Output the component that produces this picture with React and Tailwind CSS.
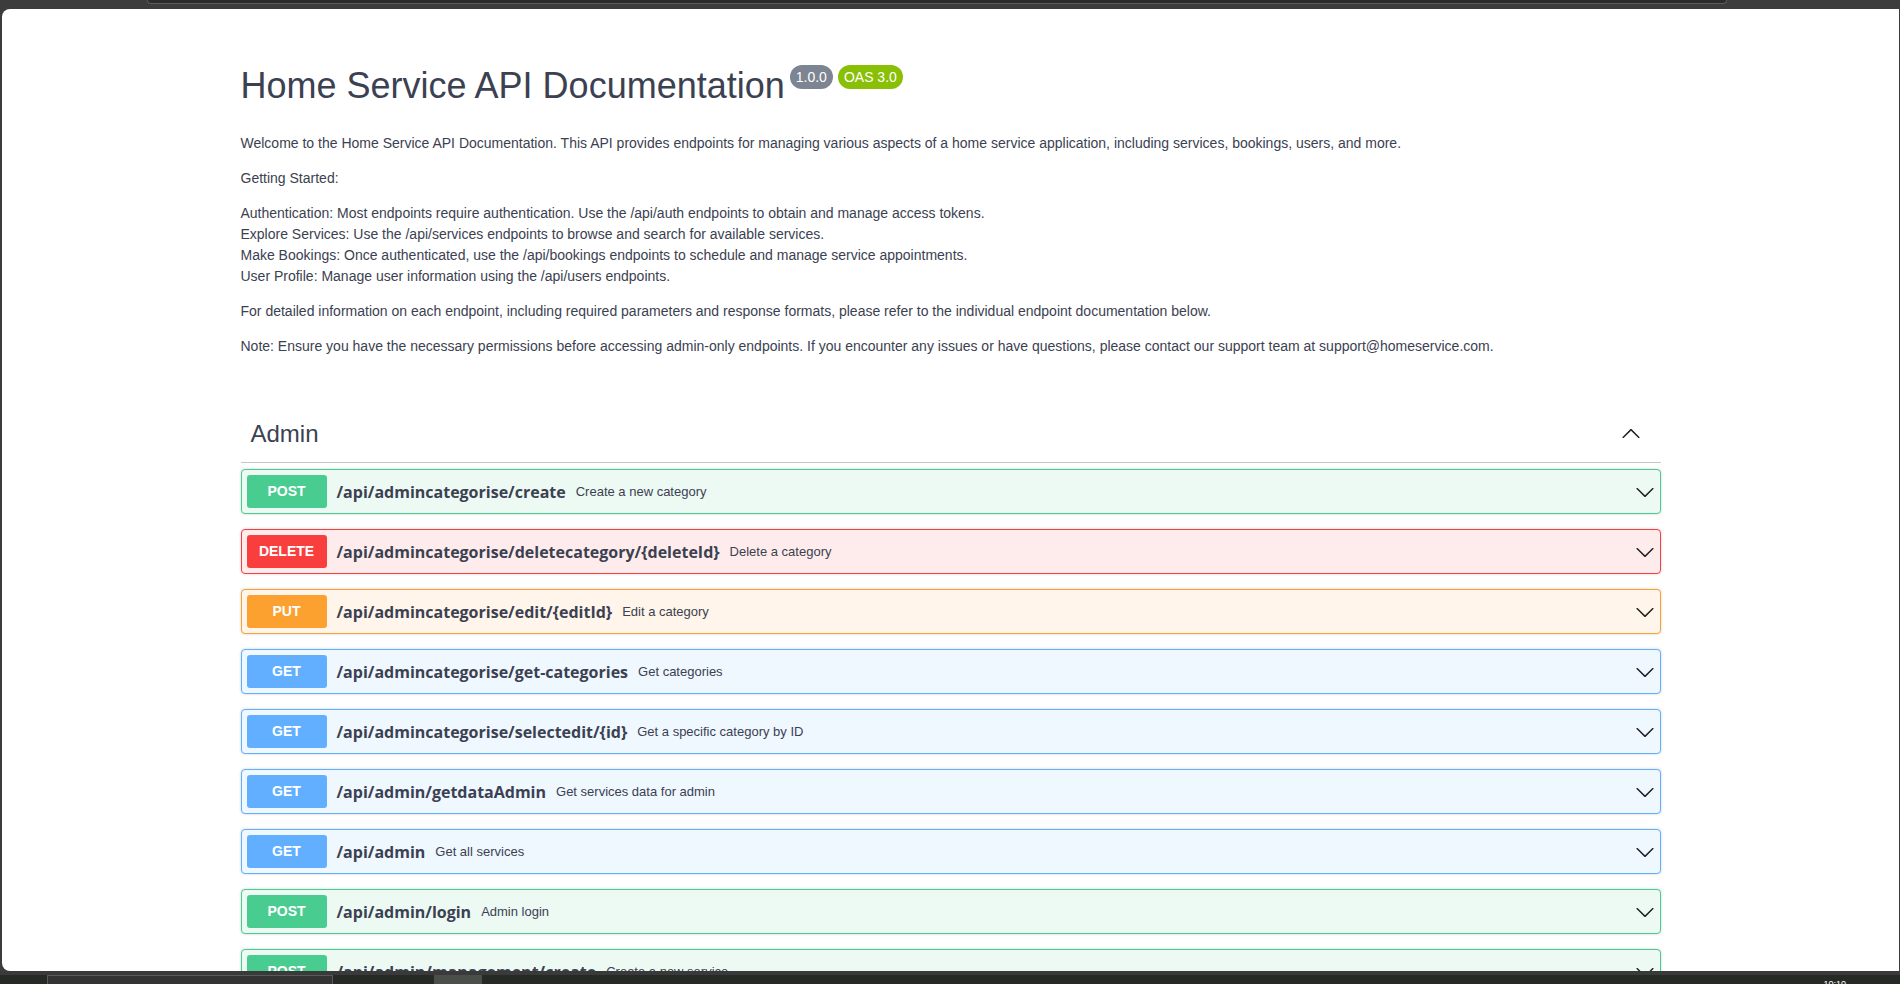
import React from "react";

const METHOD_STYLES = {
  POST: {
    row: "bg-[#edfaf4] border-[#49cc90]",
    badge: "bg-[#49cc90]",
  },
  DELETE: {
    row: "bg-[#feecec] border-[#f93e3e]",
    badge: "bg-[#f93e3e]",
  },
  PUT: {
    row: "bg-[#fff5ea] border-[#fca130]",
    badge: "bg-[#fca130]",
  },
  GET: {
    row: "bg-[#eff7ff] border-[#61affe]",
    badge: "bg-[#61affe]",
  },
};

const endpoints = [
  { method: "POST", path: "/api/admincategorise/create", desc: "Create a new category" },
  { method: "DELETE", path: "/api/admincategorise/deletecategory/{deleteId}", desc: "Delete a category" },
  { method: "PUT", path: "/api/admincategorise/edit/{editId}", desc: "Edit a category" },
  { method: "GET", path: "/api/admincategorise/get-categories", desc: "Get categories" },
  { method: "GET", path: "/api/admincategorise/selectedit/{id}", desc: "Get a specific category by ID" },
  { method: "GET", path: "/api/admin/getdataAdmin", desc: "Get services data for admin" },
  { method: "GET", path: "/api/admin", desc: "Get all services" },
  { method: "POST", path: "/api/admin/login", desc: "Admin login" },
  { method: "POST", path: "/api/admin/management/create", desc: "Create a new service" },
];

// swagger-style chevron
const Arrow = ({ up = false }) => (
  <svg
    width="20"
    height="20"
    viewBox="0 0 20 20"
    className={up ? "rotate-180" : ""}
    fill="#1f1f1f"
  >
    <path d="M17.418 6.109c.272-.268.709-.268.979 0s.271.701 0 .969l-7.908 7.83c-.27.268-.707.268-.979 0l-7.908-7.83c-.27-.268-.27-.701 0-.969.271-.268.709-.268.979 0L10 13.25l7.418-7.141z" />
  </svg>
);

const sans = "font-['Liberation_Sans',Arial,sans-serif]";

const EndpointRow = ({ method, path, desc }) => {
  const s = METHOD_STYLES[method];
  return (
    <div
      className={`h-[45px] shrink-0 flex items-center border rounded-[4px] px-[5px] shadow-[0_0_3px_rgba(0,0,0,0.19)] ${s.row}`}
    >
      <div
        className={`w-[80px] h-[33px] rounded-[3px] flex items-center justify-center text-white text-[14px] font-bold ${sans} ${s.badge}`}
      >
        {method}
      </div>
      <span className="ml-[10px] text-[16px] font-bold text-[#3b4151] font-['Open_Sans',sans-serif]">
        {path}
      </span>
      <span className={`ml-[10px] text-[13px] text-[#3b4151] ${sans}`}>{desc}</span>
      <div className="ml-auto flex items-center">
        <Arrow />
      </div>
    </div>
  );
};

export default function App() {
  return (
    <div className="h-screen w-full flex flex-col overflow-hidden bg-[#3c3c3c]">
      {/* browser chrome strip */}
      <div className="h-[9px] shrink-0 pl-[147px]">
        <div className="w-[1580px] h-[4px] bg-[#2b2b2b] border-x border-b border-[#5c5c5c] rounded-b-[6px]" />
      </div>

      <div className="flex-1 min-h-0 flex pl-[2px] pr-[1px]">
        <div className="flex-1 bg-white rounded-l-[8px] overflow-hidden">
          <div className={`w-[1420px] mx-auto pt-[55px] text-[#3b4151] ${sans}`}>
            <h2 className="flex items-start text-[36px] leading-[44px] text-[#3b4151]">
              <span>Home Service API Documentation</span>
              <span className="ml-[5px] mt-[1px] flex gap-[5px]">
                <span className="h-[24px] px-[6px] rounded-full bg-[#7d8492] text-white text-[14px] leading-[24px]">
                  1.0.0
                </span>
                <span className="h-[24px] px-[6px] rounded-full bg-[#89bf04] text-white text-[14px] leading-[24px]">
                  OAS 3.0
                </span>
              </span>
            </h2>

            <div className="mt-[25px] flex flex-col gap-[14px] text-[14px] leading-[21px]">
              <p>
                Welcome to the Home Service API Documentation. This API provides endpoints for
                managing various aspects of a home service application, including services,
                bookings, users, and more.
              </p>
              <p>Getting Started:</p>
              <p>
                Authentication: Most endpoints require authentication. Use the /api/auth endpoints
                to obtain and manage access tokens.
                <br />
                Explore Services: Use the /api/services endpoints to browse and search for
                available services.
                <br />
                Make Bookings: Once authenticated, use the /api/bookings endpoints to schedule and
                manage service appointments.
                <br />
                User Profile: Manage user information using the /api/users endpoints.
              </p>
              <p>
                For detailed information on each endpoint, including required parameters and
                response formats, please refer to the individual endpoint documentation below.
              </p>
              <p>
                Note: Ensure you have the necessary permissions before accessing admin-only
                endpoints. If you encounter any issues or have questions, please contact our
                support team at support@homeservice.com.
              </p>
            </div>

            <div className="mt-[55px]">
              <div className="flex items-center justify-between pl-[10px] pr-[20px] pt-[7px] pb-[13px] border-b border-[#c4c6cb]">
                <span className="text-[24px] leading-[30px]">Admin</span>
                <Arrow up />
              </div>
              <div className="mt-[6px] flex flex-col gap-[15px]">
                {endpoints.map((e) => (
                  <EndpointRow key={e.method + e.path} {...e} />
                ))}
              </div>
            </div>
          </div>
        </div>
      </div>

      {/* taskbar */}
      <div className="h-[13px] shrink-0 flex flex-col">
        <div className="h-[4px] bg-[#3a3a3a]" />
        <div className="flex-1 flex items-start bg-[#262a26] overflow-hidden">
          <div className="ml-[47px] w-[286px] h-[9px] bg-[#333333] border-t border-x border-[#5a5a5a]" />
          <div className="ml-[101px] w-[48px] h-[9px] bg-[#4a4f4a]" />
          <div className="ml-auto mr-[54px] mt-[5px] text-[9px] leading-[9px] text-white font-['Liberation_Sans',sans-serif]">
            10:10
          </div>
        </div>
      </div>
    </div>
  );
}
